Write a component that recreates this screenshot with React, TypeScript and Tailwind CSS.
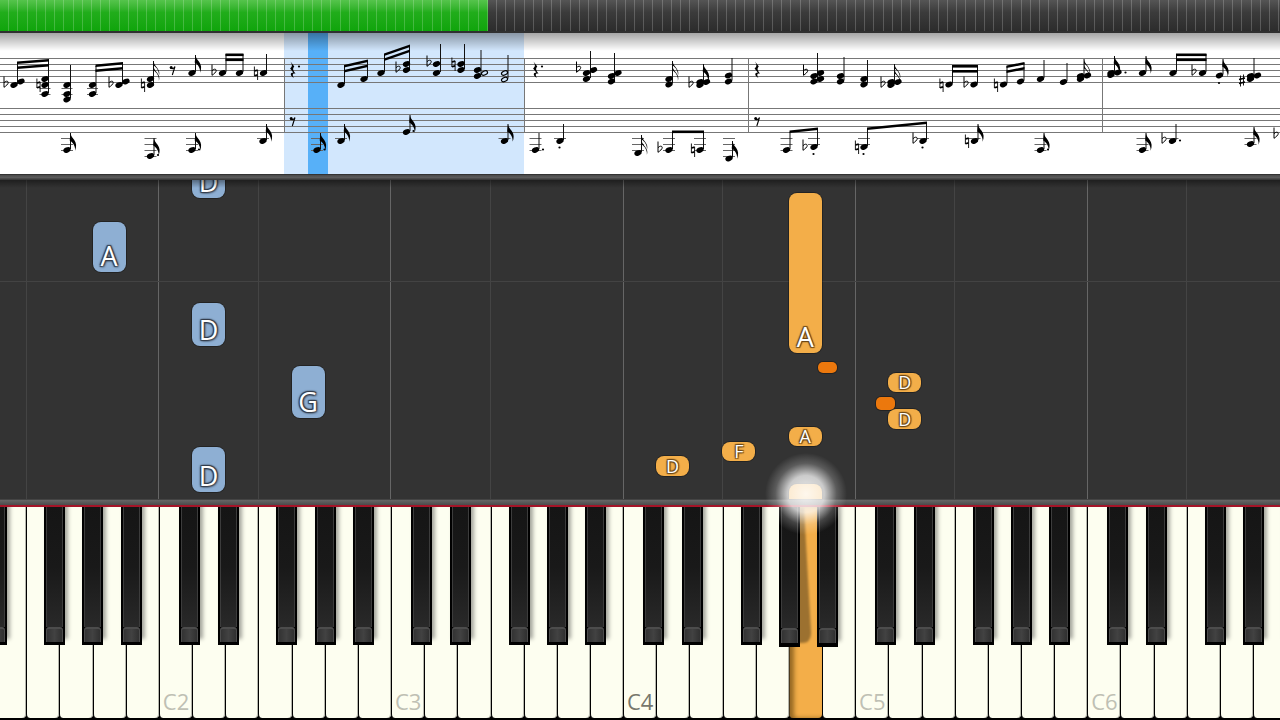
import React from 'react';

const WHITE_KEYS = 40;
const LETTERS = ['C', 'D', 'E', 'F', 'G', 'A', 'B'];
const TICKS = Array.from({ length: 139 }, (_, i) => i);

// offset of each black key from the left edge of the white key below it
const BLACK_OFFSET: Record<string, string> = {
  C: 'left-[20px]',
  D: 'left-[26px]',
  F: 'left-[18px]',
  G: 'left-[23px]',
  A: 'left-[28px]',
};

// The strip runs 40px past the left edge and 6px past the right one
const keyLeft = (index: number) => `calc(-40px + (100% + 46px) * ${index / WHITE_KEYS})`;

interface FallingNote {
  key: number;
  bottom: number;
  height: number;
  label?: string;
  hand: 'left' | 'right';
  sharp?: string;
}

const NOTES: FallingNote[] = [
  { key: 7, bottom: 301, height: 46, label: 'D', hand: 'left' },
  { key: 4, bottom: 227, height: 50, label: 'A', hand: 'left' },
  { key: 7, bottom: 153, height: 43, label: 'D', hand: 'left' },
  { key: 10, bottom: 81, height: 52, label: 'G', hand: 'left' },
  { key: 7, bottom: 7, height: 45, label: 'D', hand: 'left' },
  { key: 25, bottom: 146, height: 160, label: 'A', hand: 'right' },
  { key: 28, bottom: 107, height: 19, label: 'D', hand: 'right' },
  { key: 28, bottom: 70, height: 20, label: 'D', hand: 'right' },
  { key: 25, bottom: 53, height: 19, label: 'A', hand: 'right' },
  { key: 23, bottom: 38, height: 19, label: 'F', hand: 'right' },
  { key: 21, bottom: 23, height: 20, label: 'D', hand: 'right' },
  { key: 25, bottom: -10, height: 25, hand: 'right' },
  { key: 25, bottom: 126, height: 11, hand: 'right', sharp: 'ml-[29px]' },
  { key: 27, bottom: 89, height: 13, hand: 'right', sharp: 'ml-[21px]' },
];

interface Chord {
  stem: number;
  top: number;
  heads: [number, number][];
  flags?: number;
  hollow?: [number, number][];
  dot?: [number, number];
  ledgers?: number;
}

const CHORDS: Chord[] = [
  // treble
  { stem: 17.5, top: 63, heads: [[14, 85], [21, 81.5]] },
  { stem: 48.5, top: 60, heads: [[45, 79], [45, 85], [45, 94]] },
  { stem: 70.5, top: 65, heads: [[67, 85], [67, 94], [67, 99.5]] },
  { stem: 96, top: 66, heads: [[92.5, 85], [92.5, 94]] },
  { stem: 122.5, top: 63, heads: [[119, 85], [126, 81.5]] },
  { stem: 153.5, top: 61, heads: [[150.5, 79], [150.5, 85]], flags: 2 },
  { stem: 195.5, top: 55, heads: [[192, 73]], flags: 1 },
  { stem: 226, top: 54, heads: [[222.5, 73]] },
  { stem: 243, top: 54, heads: [[239.5, 73]] },
  { stem: 266.5, top: 54, heads: [[263.5, 73]] },
  { stem: 344.5, top: 65, heads: [[341, 85]] },
  { stem: 367.5, top: 60, heads: [[364, 79]] },
  { stem: 384.5, top: 54, heads: [[381, 73]] },
  { stem: 409.5, top: 45, heads: [[406.5, 64], [406.5, 70]] },
  { stem: 440.5, top: 44, heads: [[436.5, 64], [436.5, 73]] },
  { stem: 464.5, top: 44, heads: [[461, 64], [461, 70]] },
  { stem: 481, top: 50, heads: [[477.5, 70], [477.5, 76]], hollow: [[484.5, 73]] },
  { stem: 508, top: 55, heads: [], hollow: [[504.5, 73], [504.5, 79.5]] },
  { stem: 590.5, top: 51, heads: [[586.5, 73], [593.5, 70], [586.5, 79]] },
  { stem: 614.5, top: 53, heads: [[611.5, 76], [618, 73], [611.5, 81.5]] },
  { stem: 672.5, top: 61, heads: [[669, 79], [669, 84.5]], flags: 2 },
  { stem: 703.5, top: 64, heads: [[700, 85], [700, 82], [706.5, 82]], flags: 1 },
  { stem: 732, top: 58, heads: [[728.5, 75.5], [728.5, 81.5]] },
  { stem: 817.5, top: 53, heads: [[814, 76], [820.5, 73], [814, 81.5], [820.5, 79]] },
  { stem: 844, top: 57, heads: [[840.5, 76], [840.5, 81.5]] },
  { stem: 867.5, top: 60, heads: [[864, 79], [864, 84.5]] },
  { stem: 894.5, top: 64, heads: [[891, 85], [891, 82], [898, 82]], flags: 2 },
  { stem: 952.5, top: 66, heads: [[949, 84.5]] },
  { stem: 977.5, top: 66, heads: [[974, 84.5]] },
  { stem: 1007, top: 66, heads: [[1003.5, 84.5]] },
  { stem: 1024, top: 63, heads: [[1020.5, 81.5]] },
  { stem: 1044, top: 60, heads: [[1040.5, 79]] },
  { stem: 1067, top: 63, heads: [[1063.5, 82]] },
  { stem: 1084, top: 59, heads: [[1080.5, 76], [1080.5, 79], [1087.5, 75.5]], flags: 2 },
  { stem: 1114.5, top: 56, heads: [[1111, 75], [1111, 73], [1118, 72.5]], flags: 1, dot: [1125.5, 72.5] },
  { stem: 1146, top: 56, heads: [[1142.5, 73]], flags: 1 },
  { stem: 1176.5, top: 54, heads: [[1173, 73]] },
  { stem: 1206, top: 54, heads: [[1202.5, 73]] },
  { stem: 1223, top: 59, heads: [[1219.5, 75.5]], flags: 1, dot: [1219, 83] },
  { stem: 1254, top: 58, heads: [[1250.5, 76], [1250.5, 79], [1257.5, 75.5]] },
  // bass
  { stem: 70.5, top: 133, heads: [[67, 150]], flags: 1, ledgers: 3 },
  { stem: 154, top: 138, heads: [[150.5, 156]], flags: 1, dot: [158, 155], ledgers: 4 },
  { stem: 195.5, top: 133, heads: [[192, 150]], flags: 1, dot: [199, 149.5], ledgers: 3 },
  { stem: 266.5, top: 124, heads: [[263, 141]], flags: 1, ledgers: 1 },
  { stem: 320.5, top: 133, heads: [[317, 150]], flags: 1, dot: [324.5, 149.5], ledgers: 3 },
  { stem: 344.5, top: 124, heads: [[341, 141]], flags: 1, ledgers: 1 },
  { stem: 410, top: 115, heads: [[406.5, 132]], flags: 1, dot: [413.5, 131] },
  { stem: 508, top: 124, heads: [[504.5, 141]], flags: 1, ledgers: 1 },
  { stem: 539, top: 133, heads: [[535.5, 150]], dot: [543, 149.5], ledgers: 3 },
  { stem: 563.5, top: 124, heads: [[560, 141]], dot: [559.5, 147.5], ledgers: 1 },
  { stem: 641.5, top: 135, heads: [[638, 153]], flags: 2, ledgers: 3 },
  { stem: 672.5, top: 132, heads: [[669, 150]], ledgers: 3 },
  { stem: 703.5, top: 132, heads: [[700, 150]], ledgers: 3 },
  { stem: 732.5, top: 141, heads: [[729, 158.5]], flags: 1, ledgers: 4 },
  { stem: 790, top: 132, heads: [[786.5, 150]], ledgers: 3 },
  { stem: 817.5, top: 129, heads: [[814, 147]], dot: [813.5, 154], ledgers: 2 },
  { stem: 867.5, top: 129, heads: [[864, 147]], dot: [863.5, 154], ledgers: 2 },
  { stem: 926.5, top: 123, heads: [[923, 141]], dot: [922.5, 147.5], ledgers: 1 },
  { stem: 978, top: 124, heads: [[974.5, 141]], flags: 1, ledgers: 1 },
  { stem: 1044, top: 133, heads: [[1040.5, 150]], flags: 1, dot: [1048, 149.5], ledgers: 3 },
  { stem: 1146, top: 133, heads: [[1142.5, 150]], flags: 1, ledgers: 3 },
  { stem: 1176, top: 124, heads: [[1172.5, 141]], dot: [1180, 140.5], ledgers: 1 },
  { stem: 1254, top: 127, heads: [[1250.5, 144]], flags: 1, ledgers: 2 },
];

// x1, y1, x2, y2, number of beams
const BEAMS: [number, number, number, number, number][] = [
  [17, 63, 49, 60.5, 2],
  [95.5, 66, 123, 63.5, 2],
  [225.5, 55, 243.5, 55, 2],
  [344, 66.5, 368, 61, 2],
  [384, 55, 410, 46, 2],
  [672, 132, 704, 132, 1],
  [789.5, 132, 818, 129, 1],
  [867, 129, 927, 123, 1],
  [952, 66.5, 978, 66.5, 2],
  [1006.5, 67, 1024.5, 63.5, 2],
  [1176, 55, 1206.5, 55, 2],
];

const FLATS = [
  [6, 85], [111, 85], [214, 73], [398, 70], [429, 64], [578.5, 70], [691, 85],
  [805.5, 73], [883, 85], [966, 85], [1194, 73], [660, 150], [805, 148], [915, 141],
  [1164, 141], [1276, 136],
];
const NATURALS = [
  [38.5, 85], [143, 85], [256, 73], [453.5, 64], [941.5, 85], [996, 85], [693, 150], [857, 147], [967, 141],
];
const QUARTER_RESTS = [[292.5, 70], [535.5, 70], [757, 70]];
const EIGHTH_RESTS = [[172.5, 70], [292.5, 121], [757, 121]];
const STAFF_LINES = [58.5, 64.5, 70.5, 76.5, 82.5, 108.5, 114.5, 120.5, 126.5, 132.5];
const BAR_LINES = [284.5, 524.5, 748.5, 1102.5];
const LEDGER_LINES = [138.5, 144.5, 150.5, 156.5];

const NoteChord: React.FC<{ chord: Chord }> = ({ chord }) => {
  const { stem, top, heads, hollow = [], flags = 0, dot, ledgers = 0 } = chord;
  const all = [...heads, ...hollow];
  const base = Math.max(...all.map(([, y]) => y));
  const x = all[0][0];
  return (
    <g>
      {LEDGER_LINES.slice(0, ledgers).map((y) => (
        <path key={y} d={`M${x - 6} ${y}h12`} stroke="#666" strokeWidth="1" />
      ))}
      {top < 100 && base > 90 && <path d={`M${x - 5.5} 88.5h11M${x - 5.5} 94.5h11`} stroke="#666" strokeWidth="1" />}
      <path d={`M${stem} ${top}V${base - 1}`} stroke="#111" strokeWidth="1" />
      {heads.map(([hx, hy], i) => (
        <ellipse key={i} cx={hx} cy={hy} rx="3.8" ry="2.6" transform={`rotate(-24 ${hx} ${hy})`} />
      ))}
      {hollow.map(([hx, hy], i) => (
        <ellipse key={i} cx={hx} cy={hy} rx="3.2" ry="2" transform={`rotate(-24 ${hx} ${hy})`} fill="none" stroke="#000" strokeWidth="1.1" />
      ))}
      {Array.from({ length: flags }, (_, i) => (
        <path
          key={i}
          d={`M${stem} ${top + i * 5}c.3 3 2 4.500 3.600 6.800c2.300 3.200 2.700 ${flags > 1 ? '5 1.800 8' : '6.400 1 11'}c.2-3-.6-5.300-2.200-7.500c-1-1.300-1.800-2-3.200-2.800z`}
        />
      ))}
      {dot && <circle cx={dot[0]} cy={dot[1]} r="1.1" />}
    </g>
  );
};

const SheetMusic: React.FC = () => (
  <section aria-label="Sheet music" className="relative h-[141px] shrink-0 overflow-hidden bg-white">
    <svg className="block h-full w-full" viewBox="0 33 1280 141" preserveAspectRatio="xMinYMin slice">
      <rect x="284" y="33" width="240" height="141" fill="#d2e7fd" />
      <rect x="308" y="33" width="20" height="141" fill="#57b0f8" />
      <g stroke="#777" strokeWidth="1">
        {STAFF_LINES.map((y) => <path key={y} d={`M0 ${y}H1280`} />)}
        {BAR_LINES.map((x) => <path key={x} d={`M${x} 58V133`} />)}
      </g>
      {CHORDS.map((chord) => <NoteChord key={`${chord.stem}-${chord.top}`} chord={chord} />)}
      {BEAMS.map(([x1, y1, x2, y2, count]) =>
        Array.from({ length: count }, (_, i) => (
          <path
            key={`${x1}-${i}`}
            d={`M${x1} ${y1 - 1.5 + i * 5}L${x2} ${y2 - 1.5 + i * 5}v2.600L${x1} ${y1 + 1.1 + i * 5}z`}
          />
        ))
      )}
      <g fill="none" stroke="#000">
        {FLATS.map(([x, y]) => (
          <path key={`${x}-${y}`} d={`M${x - 2} ${y - 8.500}v10.800c1.800-1.200 4.500-3.300 4.200-5c-.3-1.800-2.700-1.300-4.200.4`} strokeWidth="1" />
        ))}
        {NATURALS.map(([x, y]) => (
          <g key={`${x}-${y}`}>
            <path d={`M${x - 1.6} ${y - 6.500}v9.500M${x + 1.6} ${y - 3.200}v10.200`} strokeWidth="0.9" />
            <path d={`M${x - 1.6} ${y - 2}l3.200-.9M${x - 1.6} ${y + 2.800}l3.200-.9`} strokeWidth="1.700" />
          </g>
        ))}
        <path d="M1240.500 75.500v11M1243.500 74.500v11" strokeWidth="0.9" />
        <path d="M1239 79.500l6-1.500M1239 83.500l6-1.500" strokeWidth="1.600" />
        {EIGHTH_RESTS.map(([x, y]) => (
          <path key={`${x}-${y}`} d={`M${x - 1.8} ${y - 2}c1.500 1.200 3 .6 4.300-1.500l-2.700 8.500`} strokeWidth="1.1" />
        ))}
      </g>
      {QUARTER_RESTS.map(([x, y]) => (
        <path
          key={x}
          d={`M${x - 2} ${y - 8.500}l3.800 5c-1.800 2.300-1.600 3.200 1.200 7.200c-2.400-.8-3.800.6-1.600 4c-4.200-2-3.800-5.200-.6-5.200l-3.200-4c2.400-2.200 2.300-3.600.4-7z`}
        />
      ))}
      {EIGHTH_RESTS.map(([x, y]) => <circle key={`${x}-${y}`} cx={x - 1.3} cy={y - 2.5} r="1.5" />)}
      <circle cx="299" cy="66.500" r="1.100" />
      <circle cx="542" cy="66.500" r="1.100" />
    </svg>
    <div className="pointer-events-none absolute inset-x-0 top-0 h-[18px] bg-linear-to-b from-black/35 to-transparent" />
  </section>
);

const ProgressBar: React.FC = () => (
  <div
    role="progressbar"
    aria-label="Song position"
    aria-valuenow={38}
    className="relative h-[33px] shrink-0 border-b-2 border-[#303030] bg-linear-to-b from-[#555] via-[#3b3b3b] via-40% to-[#2c2c2c]"
  >
    <div className="h-full bg-linear-to-b from-[#55c44c] via-[#21ad1b] via-40% to-[#0fa40b]" style={{ width: '38.1%' }} />
    <div className="absolute inset-0 flex">
      {TICKS.map((tick) => (
        <span key={tick} className="flex-1 border-r border-white/20" />
      ))}
    </div>
  </div>
);

const NoteBlock: React.FC<{ note: FallingNote }> = ({ note }) => {
  const small = note.height < 30;
  const color = note.sharp
    ? `bg-[#ec780d] rounded-[5px] ${note.sharp}`
    : note.hand === 'left' ? 'bg-[#8eafd3] rounded-lg' : 'bg-[#f3ae49] rounded-lg';
  const outline = note.hand === 'left'
    ? '[text-shadow:-1px_-1px_1px_#333c4a,1px_-1px_1px_#333c4a,-1px_1px_1px_#333c4a,1px_1px_2px_#333c4a,0_0_3px_#333c4a]'
    : '[text-shadow:-1px_-1px_1px_#6b4718,1px_-1px_1px_#6b4718,-1px_1px_1px_#6b4718,1px_1px_1px_#6b4718]';
  return (
    <div
      className={`absolute flex items-end justify-center text-white ring-1 ring-black/30 ${color} ${outline} ${
        note.sharp ? 'w-[19px]' : 'w-[33px]'
      } ${small ? 'text-[18px] leading-[19px]' : 'text-[27px] leading-[32px]'}`}
      style={{ left: keyLeft(note.key), bottom: note.bottom, height: note.height }}
    >
      {note.label}
    </div>
  );
};

const NoteRoll: React.FC = () => (
  <section aria-label="Falling notes" className="flex min-h-0 flex-1 flex-col">
    <div className="h-[6px] shrink-0 border-t border-[#333] bg-linear-to-b from-[#4a4a4a] via-[#5a5a5a] to-[#333]" />
    <div className="relative min-h-0 flex-1 overflow-hidden bg-[#333]">
      <div className="-ml-[40px] -mr-[6px] flex h-full">
        {Array.from({ length: WHITE_KEYS }, (_, i) => {
          const letter = LETTERS[(i + 1) % 7];
          const line = letter === 'C' ? 'border-l border-[#666]' : letter === 'F' ? 'border-l border-[#444]' : '';
          return <div key={i} className={`flex-1 ${line}`} />;
        })}
      </div>
      <div className="absolute inset-x-0 bottom-[217px] h-px bg-[#434343]" />
      {NOTES.map((note, i) => <NoteBlock key={i} note={note} />)}
      <div className="absolute inset-x-0 top-0 h-2 bg-linear-to-b from-black/40 to-transparent" />
    </div>
    <div className="h-[6px] shrink-0 border-t border-[#444] bg-linear-to-b from-[#666] to-[#4b4b4b]" />
  </section>
);

const PianoKey: React.FC<{ index: number }> = ({ index }) => {
  const letter = LETTERS[(index + 1) % 7];
  const octave = Math.floor((index + 1) / 7) + 1;
  const pressed = index === 25;
  const nearPressed = index === 24 || index === 25;
  return (
    <div className="relative flex-1">
      <button
        aria-label={`${letter}${octave}`}
        className={`relative flex h-full w-full items-end justify-center overflow-hidden rounded-b-[4px] border-l pb-[5px] text-[22px] leading-[24px] ${
          pressed
            ? 'border-[#4a3a20] bg-[#f3ae49] shadow-[inset_4px_0_4px_rgba(90,60,10,0.6)]'
            : 'border-black bg-[#fdfef0] shadow-[inset_-1px_0_0_#b5b6ac]'
        } ${octave === 4 ? 'text-[#77776c]' : 'text-[#bfc0b4]'}`}
      >
        {letter === 'C' && `C${octave}`}
        {pressed && (
          <svg className="absolute left-0 top-0 h-[140px] w-[24px] blur-[1px]" viewBox="0 0 24 140">
            <path d="M0 0H14L21 126Q21 136 12 136H0z" fill="#9c7130" />
          </svg>
        )}
      </button>
      {BLACK_OFFSET[letter] && (
        <button
          aria-label={`${letter} sharp ${octave}`}
          className={`absolute top-0 z-10 flex w-[21px] flex-col bg-black px-[2px] ${nearPressed ? 'h-[140px] pb-[4px]' : 'h-[138px] pb-[3px]'} ${
            index === 24 ? '' : 'shadow-[3px_-6px_4px_rgba(0,0,0,0.35)]'
          } ${BLACK_OFFSET[letter]}`}
        >
          <span className="w-full flex-1 border-x border-[#3c3c3c] bg-linear-to-b from-[#151515] via-[#191919] to-[#292929]" />
          <span className="h-[15px] w-full rounded-t-[3px] border-x border-t-2 border-[#4c4c4c] bg-linear-to-r from-[#333] via-[#424242] to-[#303030]" />
        </button>
      )}
    </div>
  );
};

const Keyboard: React.FC = () => (
  <section aria-label="Keyboard" className="h-[215px] shrink-0 overflow-hidden border-t-2 border-[#a51428] bg-black pb-[2px]">
    <div className="-ml-[40px] -mr-[6px] flex h-full">
      {Array.from({ length: WHITE_KEYS }, (_, i) => <PianoKey key={i} index={i} />)}
    </div>
  </section>
);

const App: React.FC = () => (
  <main className="flex h-screen min-h-[560px] flex-col overflow-hidden bg-[#333] font-['Open_Sans','Noto_Sans',sans-serif]">
    <ProgressBar />
    <SheetMusic />
    <div className="relative flex min-h-0 flex-1 flex-col">
      <NoteRoll />
      <Keyboard />
      <div
        className="pointer-events-none absolute bottom-[185px] z-20 -ml-[24px] size-[82px] rounded-full bg-[radial-gradient(circle_closest-side,rgba(255,255,255,0.9)_0%,rgba(255,255,255,0.75)_45%,rgba(255,255,255,0.2)_75%,transparent_100%)]"
        style={{ left: keyLeft(25) }}
      />
    </div>
  </main>
);

export default App;
